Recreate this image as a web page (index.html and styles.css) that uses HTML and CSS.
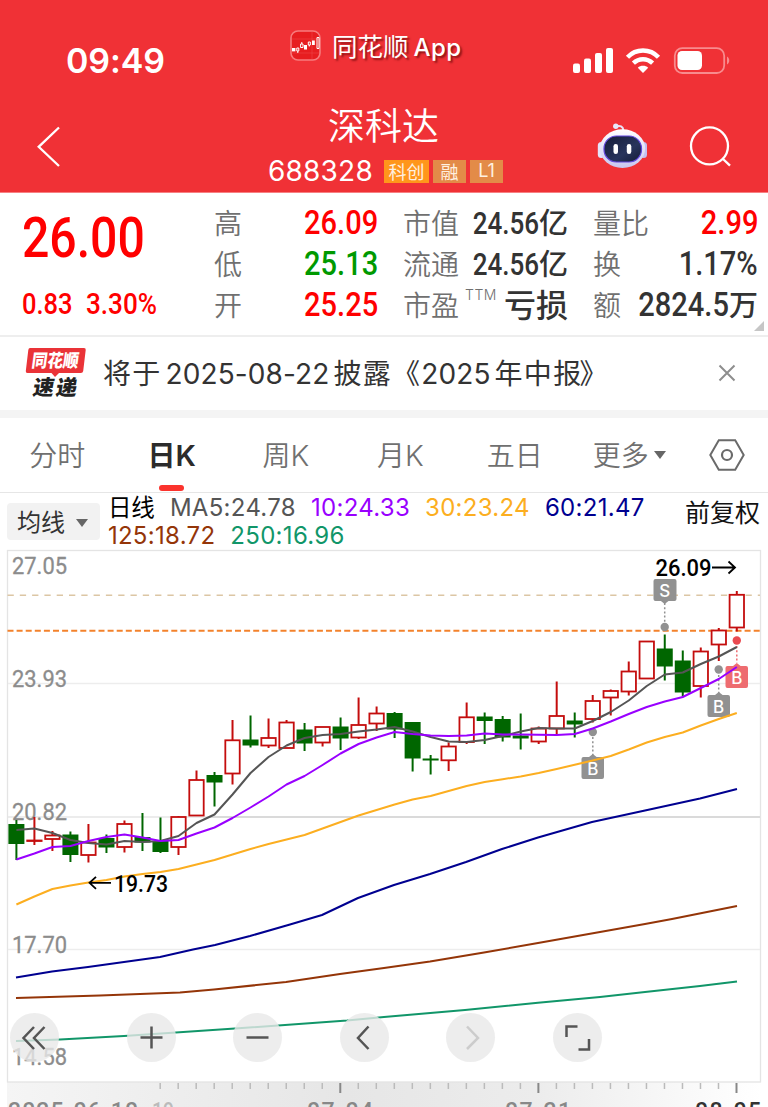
FILE: index.html
```html
<!DOCTYPE html>
<html lang="zh-CN">
<head>
<meta charset="utf-8">
<title>深科达 688328</title>
<link rel="stylesheet" href="styles.css">
</head>
<body>
<header class="header">
  <div class="status">
    <div class="clock">09:49</div>
    <div class="brand">
      <svg class="brand-icon" width="32" height="32" viewBox="0 0 32 32"><rect x="1" y="1" width="29" height="29" rx="7" fill="#e71d20" stroke="#f77b7d" stroke-width="1.6"/><path d="M22 2v27M2 9h27M2 23h27" stroke="#ee4548" stroke-width=".6"/><g fill="#fff"><rect x="2" y="18" width="3.4" height="3.4"/><rect x="14" y="15" width="3" height="4.5"/><rect x="22" y="10.5" width="2.8" height="4.5"/></g><g fill="none" stroke="#fff" stroke-width="1"><path d="M6.8 18h2v3h-2zM7.8 21v2M10.6 14h2.4v3.500h-2.400zM11.800 14v-2M18.300 12h2v3h-2zM19.300 15v1.500M27 7.500h2v11h-2z"/></g></svg>
      <span class="brand-name">同花顺<span class="brand-app">App</span></span>
    </div>
    <svg class="signals" width="160" height="30" viewBox="572 46 160 30"><g fill="#fff"><rect x="573" y="63.500" width="7" height="9.500" rx="2"/><rect x="584" y="58.500" width="7" height="14.500" rx="2"/><rect x="595" y="53" width="7" height="20" rx="2"/><rect x="606" y="48" width="7" height="25" rx="2"/><path d="M643 73l-5.200-5.300c2.800-2.600 7.600-2.600 10.400 0z"/></g><g fill="none" stroke="#fff" stroke-width="4.400"><path d="M627.500 57.300c8.400-9 22.600-9 31 0"/><path d="M633.400 63.200c5.500-5.300 13.700-5.300 19.200 0"/></g><rect x="674.800" y="48.200" width="49.400" height="24.800" rx="7.500" fill="none" stroke="#f88b8e" stroke-width="1.800"/><rect x="677.500" y="51" width="24.500" height="19" rx="4.500" fill="#fff"/><path d="M727 56.500c3 1.500 3 6.500 0 8z" fill="#f88b8e"/></svg>
  </div>
  <div class="nav">
    <svg class="back" width="26" height="44" viewBox="36 125 26 44"><path d="M59 127.500L38.700 146.800 59 166" fill="none" stroke="#fff" stroke-width="2.300"/></svg>
    <div class="stock">
      <div class="stock-name">深科达</div>
      <div class="stock-sub"><span class="code">688328</span><span class="tag tag-main">科创</span><span class="tag">融</span><span class="tag tag-l1">L1</span></div>
    </div>
    <svg class="robot" width="52" height="48" viewBox="596 122 52 48"><defs><linearGradient id="shell" x1="0" y1="0" x2="0" y2="1"><stop offset="0" stop-color="#fff"/><stop offset="1" stop-color="#c9c5ef"/></linearGradient><linearGradient id="visor" x1="0" y1="0" x2="1" y2="1"><stop offset="0" stop-color="#141b36"/><stop offset=".6" stop-color="#28345c"/><stop offset="1" stop-color="#141b36"/></linearGradient></defs><path d="M616 126.500c4-1.500 7 0 7.500 4" fill="none" stroke="#e9e3f5" stroke-width="2"/><circle cx="615.800" cy="126.200" r="2.700" fill="#e7e8fa"/><rect x="597.800" y="142" width="7" height="16" rx="3.500" fill="#e5e3fa"/><rect x="640" y="142" width="7" height="16" rx="3.500" fill="#c4bff0"/><ellipse cx="622.500" cy="148.600" rx="22.700" ry="19.400" fill="url(#shell)"/><rect x="604" y="136" width="37.500" height="26" rx="12.500" fill="url(#visor)" stroke="#6246dc" stroke-width="1.200"/><rect x="613.500" y="144" width="4.500" height="10" rx="2.200" fill="#fff"/><rect x="626.800" y="144" width="4.500" height="10" rx="2.200" fill="#fff"/></svg>
    <svg class="search" width="44" height="44" viewBox="688 124 44 44"><g fill="none" stroke="#fff" stroke-width="2.300"><circle cx="709.500" cy="145.900" r="18.500"/><path d="M722.500 158.500l7.500 7.200"/></g></svg>
  </div>
</header>

<section class="quote">
  <div class="price">
    <div class="last"><span class="din">26.00</span></div>
    <div class="change"><span class="din chg">0.83</span><span class="din pct">3.30%</span></div>
  </div>
  <dl class="col col-a">
    <dt>高</dt><dd class="up"><span class="din">26.09</span></dd>
    <dt>低</dt><dd class="down"><span class="din">25.13</span></dd>
    <dt>开</dt><dd class="up"><span class="din">25.25</span></dd>
  </dl>
  <dl class="col col-b">
    <dt>市值</dt><dd><span class="din small">24.56</span>亿</dd>
    <dt>流通</dt><dd><span class="din small">24.56</span>亿</dd>
    <dt>市盈<sup>TTM</sup></dt><dd class="loss">亏损</dd>
  </dl>
  <dl class="col col-c">
    <dt>量比</dt><dd class="up"><span class="din">2.99</span></dd>
    <dt>换</dt><dd><span class="din">1.17%</span></dd>
    <dt>额</dt><dd><span class="din">2824.5</span>万</dd>
  </dl>
  <i class="corner"></i>
</section>

<section class="notice">
  <svg class="flash" width="64" height="54" viewBox="24 346 64 54"><path d="M30 348h54q2 0 1.700 2l-2.500 21q-.3 2-2.300 2H59l-4 4-3.500-4H27.500q-2 0-1.700-2l2.500-21q.3-2 1.700-2z" fill="#ea3338"/><g transform="translate(31 367) skewX(-8)"><text class="flash-a" x="0" y="0" textLength="47" lengthAdjust="spacingAndGlyphs">同花顺</text></g><g transform="translate(32 395) skewX(-10)"><text class="flash-b" x="0" y="0" textLength="44">速递</text></g></svg>
  <p class="notice-text">将于<span class="num">2025-08-22</span>披露《<span class="num year">2025</span>年中报<span class="close-mark">》</span></p>
  <svg class="close" width="18" height="18" viewBox="0 0 18 18"><path d="M1.500 1.500l15 15M16.500 1.500l-15 15" stroke="#8e8e8e" stroke-width="2" fill="none"/></svg>
</section>

<nav class="tabs">
  <span class="tab">分时</span>
  <span class="tab active">日<b>K</b></span>
  <span class="tab">周<b>K</b></span>
  <span class="tab">月<b>K</b></span>
  <span class="tab">五日</span>
  <span class="tab">更多<i class="caret"></i></span>
  <svg class="gear" width="36" height="32" viewBox="0 0 36 32"><path d="M9.800 1.200h16.400L34.700 16l-8.500 14.800H9.800L1.300 16z" fill="none" stroke="#6a6a6a" stroke-width="2"/><circle cx="18" cy="16" r="5" fill="none" stroke="#6a6a6a" stroke-width="2.200"/></svg>
</nav>

<section class="legend">
  <div class="selector">均线<i class="caret"></i></div>
  <div class="series">
    <div class="line"><span class="period">日线</span><span class="ma5">MA5:24.78</span><span class="ma10">10:24.33</span><span class="ma30">30:23.24</span><span class="ma60">60:21.47</span></div>
    <div class="line"><span class="ma125">125:18.72</span><span class="ma250">250:16.96</span></div>
  </div>
  <div class="adjust">前复权</div>
</section>

<section class="chart">
  <svg class="plot" id="plot" width="768" height="558" viewBox="0 549 768 558">
    <defs><linearGradient id="axis" x1="0" x2="1" y1="0" y2="0"><stop offset="0" stop-color="#f5f5f5"/><stop offset=".2" stop-color="#eee"/><stop offset=".45" stop-color="#e6e6e6"/><stop offset=".7" stop-color="#ececec"/><stop offset="1" stop-color="#fff"/></linearGradient></defs>
    <rect x="7" y="1082" width="754" height="25" fill="url(#axis)"/>
    <g fill="none" stroke="#e4e4e4" stroke-width="1.300"><rect x="7.500" y="550.500" width="753" height="531.500"/><path d="M8 683.500H760M8 949.500H760" stroke="#ededed"/><path d="M8 817H240" stroke="#e6e6e6"/><path d="M210 817H760" stroke="#dadada" stroke-width="1.800"/></g>
    <path d="M7.500 595.200H760" stroke="#dcc6a4" stroke-width="1.500" stroke-dasharray="6.300 6"/>
    <path d="M7.500 630.700H760" stroke="#f3822c" stroke-width="2" stroke-dasharray="6 3.100"/>
    <g class="scale">
      <text x="12" y="574" textLength="55" lengthAdjust="spacingAndGlyphs">27.05</text>
      <text x="12" y="687" textLength="55" lengthAdjust="spacingAndGlyphs">23.93</text>
      <text x="12" y="820" textLength="55" lengthAdjust="spacingAndGlyphs">20.82</text>
      <text x="12" y="953" textLength="55" lengthAdjust="spacingAndGlyphs">17.70</text>
      <text x="12" y="1065" textLength="55" lengthAdjust="spacingAndGlyphs">14.58</text>
    </g>
    <g id="candles"></g>
    <g class="marks">
      <g fill="#919191" stroke="#919191"><path d="M664.700 603v19M592.800 737v18M718.700 675v18" stroke-width="1.500" stroke-dasharray="2 2.200"/><g stroke="none"><circle cx="664.700" cy="627" r="4.200"/><circle cx="592.800" cy="732" r="4.200"/><circle cx="718.700" cy="669.500" r="4.200"/><path d="M655.500 579h19q2 0 2 2v18q0 2-2 2h-6l-3.800 3-3.800-3h-5.400q-2 0-2-2v-18q0-2 2-2zM583.500 757h5.500l3.800-3 3.800 3h5.400q2 0 2 2v18q0 2-2 2h-18.500q-2 0-2-2v-18q0-2 2-2zM709.500 695h5.500l3.800-3 3.800 3h5.400q2 0 2 2v18q0 2-2 2h-18.500q-2 0-2-2v-18q0-2 2-2z"/></g></g>
      <g fill="#ee6c70"><path d="M736.800 646v17" stroke="#ee6c70" stroke-width="1.500" stroke-dasharray="2 2.200"/><circle cx="736.800" cy="640.500" r="4.200" fill="#ea4a50"/><path d="M727.500 666h5.500l3.800-3 3.800 3h5.400q2 0 2 2v18q0 2-2 2h-18.500q-2 0-2-2v-18q0-2 2-2z"/></g>
      <text x="664.700" y="597">S</text><text x="592.800" y="775">B</text><text x="718.700" y="713">B</text><text x="736.800" y="684">B</text>
    </g>
    <g id="averages" fill="none" stroke-width="2" stroke-linejoin="round"></g>
    <g class="extreme"><text x="655.500" y="576" textLength="56" lengthAdjust="spacingAndGlyphs">26.09</text><text x="114" y="891.500" textLength="54" lengthAdjust="spacingAndGlyphs">19.73</text><path d="M712 567.500h22.500M728.500 561.500l6.500 6-6.500 6M111 882.800H89.500M96 876.800l-6.500 6 6.500 6" fill="none" stroke="#000" stroke-width="1.800"/></g>
    <g id="ticks"></g>
    <g class="dates"><text x="8" y="1119" textLength="130" lengthAdjust="spacing">2025-06-10</text><text x="152" y="1119" textLength="22" lengthAdjust="spacingAndGlyphs" fill="#bbb">19</text><text x="307" y="1119" textLength="66" lengthAdjust="spacing">07-04</text><text x="505" y="1119" textLength="66" lengthAdjust="spacing">07-21</text><text x="695" y="1119" textLength="66" lengthAdjust="spacing" fill="#333">08-05</text></g>
  </svg>
  <div class="controls">
    <span class="ctl first"><svg width="49" height="49" viewBox="0 0 49 49"><path d="M24 14L13.500 25 24 36M34.500 14L24 25l10.500 11"/></svg></span>
    <span class="ctl"><svg width="49" height="49" viewBox="0 0 49 49"><path d="M13.500 24.500h22M24.500 13.500v22"/></svg></span>
    <span class="ctl"><svg width="49" height="49" viewBox="0 0 49 49"><path d="M13.500 24.500h22"/></svg></span>
    <span class="ctl"><svg width="49" height="49" viewBox="0 0 49 49"><path d="M28.500 13.500L18 25l10.500 11"/></svg></span>
    <span class="ctl off"><svg width="49" height="49" viewBox="0 0 49 49"><path d="M21 13.500L32 25 21 36"/></svg></span>
    <span class="ctl"><svg width="49" height="49" viewBox="0 0 49 49"><path d="M13.500 24V13.500H24.500M36 26v10.500H25.500"/></svg></span>
  </div>
</section>
<script src="chart.js"></script>
</body>
</html>
```
FILE: styles.css
```css
* { box-sizing: border-box; margin: 0; padding: 0; }
body { width: 768px; height: 1107px; overflow: hidden; background: #fff; color: #333; font-family: "Inter", "Noto Sans CJK SC", sans-serif; }
svg { display: block; flex: none; }

.header { height: 193px; background: #f03136; border-bottom: 1px solid #f78083; color: #fff; }
.status { height: 92px; padding: 28px 36px 0 66px; display: flex; align-items: flex-start; }
.clock { width: 224px; font-size: 34px; line-height: 40px; font-weight: 600; padding-top: 13px; letter-spacing: -.1px; }
.brand { display: flex; gap: 10px; width: 282px; padding-top: 2px; }
.brand-name { font-family: "Noto Sans CJK SC", sans-serif; font-size: 25.500px; line-height: 34px; margin-top: -2px; text-shadow: 2px 2px 2px rgba(80, 0, 0, .6); white-space: nowrap; }
.brand-app { font-family: "Inter", sans-serif; font-size: 24px; margin-left: 5px; letter-spacing: .5px; font-weight: 500; }
.signals { margin-top: 18px; }
.nav { height: 100px; padding-left: 36px; display: flex; align-items: flex-start; }
.back { margin-top: 33px; }
.stock { width: 322px; margin-left: 162px; padding-left: 44px; white-space: nowrap; }
.stock-name { padding-left: 60px; font: 350 37px/56px "Noto Sans CJK SC", sans-serif; margin-top: 4px; }
.stock-sub { display: flex; align-items: center; height: 34px; margin-top: 2px; }
.code { width: 116px; font-size: 28px; letter-spacing: .2px; margin-left: 0; }
.tag { height: 23px; width: 33px; margin-right: 4px; background: #e38b48; color: #fff0e0; font: 18px/22px "Noto Sans CJK SC", sans-serif; text-align: center; }
.tag-main { width: 45px; background: #ff961b; }
.tag-l1 { font-family: "Inter", sans-serif; font-size: 18px; }
.robot { margin: 30px 0 0 50px; }
.search { margin: 32px 0 0 40px; }

.quote { position: relative; height: 144px; border-bottom: 2px solid #eee; display: grid; grid-template-columns: 167px 164px 165px 165px; column-gap: 25px; padding-left: 22px; }
.din { display: inline-block; font-family: "Roboto", sans-serif; font-weight: 500; transform: scaleX(.88); transform-origin: right; }
.price { color: #f00; }
.price .din { transform-origin: left; }
.last { height: 91px; font-size: 56px; line-height: 89px; }
.price .last .din { transform: scaleX(.86); }
.change { display: flex; font-size: 29px; line-height: 40px; }
.chg { width: 64px; }
.price .pct { transform: scaleX(.9); }
.col { padding-top: 9px; display: grid; grid-template-columns: auto 1fr; grid-auto-rows: 41px; line-height: 41px; font-family: "Noto Sans CJK SC", sans-serif; white-space: nowrap; }
.col dt { font-size: 28px; color: #707070; font-weight: 350; }
.col dd { font-size: 29px; font-weight: 500; text-align: right; justify-self: end; margin: -1px 0 0 -40px; }
.col dd .din { font-size: 33px; }
.col dd .small { font-size: 31px; transform: scaleX(.84); }
.col .loss { font-size: 32px; }
.col sup { font: 300 14px/14px "Inter", sans-serif; margin-left: 6px; letter-spacing: .5px; position: absolute; padding-top: 4px; }
.up { color: #f00; }
.down { color: #090; }
.corner { position: absolute; right: 4px; bottom: 4px; border-left: 10px solid transparent; border-bottom: 10px solid #c6c6c6; }

.notice { height: 81px; padding: 9px 32px 0 24px; border-bottom: 8px solid #f4f4f4; display: flex; }
.notice-text { margin-left: 15px; width: 615px; font-family: "Noto Sans CJK SC", sans-serif; font-size: 28px; line-height: 54px; letter-spacing: 1.300px; white-space: nowrap; margin-top: -1px; }
.num { font-family: "Inter", sans-serif; letter-spacing: .1px; margin: 0 4px; }
.year { margin-left: 0; }
.close-mark { margin-left: -3px; }
.close { margin-top: 18px; }
.flash-a { font: 900 18px "Noto Sans CJK SC", sans-serif; fill: #fff; }
.flash-b { font: 900 21px "Noto Sans CJK SC", sans-serif; fill: #222; }

.tabs { height: 75px; border-bottom: 1px solid #e6e6e6; display: grid; grid-template-columns: repeat(6, 114.400px) 1fr; align-items: center; }
.tab { position: relative; height: 74px; text-align: center; font: 350 28px/73px "Noto Sans CJK SC", sans-serif; color: #707070; white-space: nowrap; }
.tab b { font-family: "Inter", sans-serif; font-weight: 300; font-size: 29px; }
.active, .active b { color: #2b2b2b; font-weight: 600; }
.active::after { content: ""; position: absolute; left: 45px; bottom: 1px; width: 25px; height: 6px; border-radius: 3px; background: #fb332d; }
.caret { display: inline-block; border: 6px solid transparent; border-top: 8px solid #666; border-bottom: 0; margin-left: 5px; vertical-align: 7px; }
.gear { justify-self: center; }

.legend { height: 56px; padding: 0 8px 0 7px; display: flex; }
.selector { width: 93px; height: 37px; margin-top: 10px; padding-left: 10px; border-radius: 4px; background: #f2f2f2; color: #333; font: 24px/36px "Noto Sans CJK SC", sans-serif; white-space: nowrap; }
.selector .caret { margin-left: 11px; vertical-align: 4px; border-width: 8px 6px 0; }
.series { width: 586px; padding: 1px 0 0 8px; font-size: 24px; letter-spacing: .3px; }
.line { display: flex; gap: 15px; height: 28px; line-height: 28px; white-space: nowrap; }
.period { color: #000; font-family: "Noto Sans CJK SC", sans-serif; font-size: 23.500px; letter-spacing: 0; line-height: 26px; margin-top: -1px; }
.ma5 { color: #555; }
.ma10 { color: #90f; }
.ma30 { color: #fcae20; }
.ma60 { color: #000090; }
.ma125 { color: #943508; }
.ma250 { color: #119669; }
.adjust { flex: 1; text-align: right; color: #111; font: 25px/37px "Noto Sans CJK SC", sans-serif; white-space: nowrap; }

.chart { position: relative; height: 558px; }
.scale text { font: 400 24px "Roboto", sans-serif; fill: #8c8c8c; stroke: #8c8c8c; stroke-width: .3px; }
.marks text { font: 500 17px "Inter", sans-serif; fill: #fff; text-anchor: middle; }
.extreme text { font: 500 24px "Roboto", sans-serif; fill: #000; }
.dates { font: 500 23px "Roboto", sans-serif; fill: #888; }
.controls { position: absolute; left: 10px; top: 464px; display: flex; gap: 57.500px; }
.ctl { width: 49px; height: 49px; border-radius: 50%; background: rgba(232, 232, 232, .8); }
.ctl.first { margin-right: 10px; }
.ctl path { fill: none; stroke: #555; stroke-width: 2.500; }
.ctl.off path { stroke: #ccc; }
```
FILE: chart.js
```js
const NS = 'http://www.w3.org/2000/svg';
const X = i => 16.4 + 18.01 * i;
const add = (parent, tag, attrs) => {
  const el = document.createElementNS(NS, tag);
  for (const k in attrs) el.setAttribute(k, attrs[k]);
  document.getElementById(parent).appendChild(el);
};

// [direction, body top, body bottom, wick top, wick bottom]
const candles = [
  ['g',824,844,820,860],['r',840.5,841,817,845],['r',835.5,839,831,851],['g',834.5,855,831.5,862],['r',842.5,855,824,862.5],
  ['g',838,847.5,834.5,853],['r',824,847,820.5,852.5],['g',837,842.5,813,851],['g',841,852,817.5,853],['r',817,847,816,855],
  ['r',780,815.5,770.5,815.5],['g',775,782.5,772,806.5],['r',740.3,773.5,720,784.5],['g',739.5,745.5,715.5,747.5],['r',738,745.5,718.5,748],
  ['r',722.5,748,720,748],['g',729.5,743.5,723,751],['r',727,742.5,727,746.5],['g',726.5,738.5,717.5,750],['r',725,737.5,697.5,739],
  ['r',713.5,723.5,706.5,731],['g',713,729.5,712,738],['g',722,758.5,722,771.5],['g',758.5,760.5,755,774.5],['r',746.5,760.3,742.5,771],
  ['r',717.3,742,702.5,744],['g',716.5,721,712.5,744],['g',719,737.5,716,741.5],['g',735.5,738.5,713.5,749.5],['r',728.5,741.5,726.5,744],
  ['r',716,728.5,681.5,735],['g',720.5,724.5,712.5,737.5],['r',701,719,695,722.5],['r',691,697.5,689.5,715.5],['r',671.5,691.5,661.5,695.5],
  ['r',641.5,678.5,641.5,678.5],['g',648.5,666.5,634.5,680.5],['g',660.5,692.5,650.5,696.5],['r',651.5,686,647.5,697.5],['r',630.5,644.5,628,661],
  ['r',594.8,627.5,591,631.5]
];
candles.forEach(([c, t, b, wt, wb], i) => {
  const x = X(i);
  const color = c === 'r' ? '#c40d0d' : '#006600';
  add('candles', 'path', { d: `M${x} ${wt}V${wb}`, stroke: color, 'stroke-width': 2 });
  add('candles', 'rect', c === 'r'
    ? { x: x - 7.2, y: t, width: 14.4, height: b - t, fill: '#fff', stroke: color, 'stroke-width': 1.8 }
    : { x: x - 8, y: t, width: 16, height: b - t, fill: color });
});

const perDay = ys => ys.map((y, i) => `${X(i)},${y}`).join(' ');
const lines = [
  ['#119669', '16,1041 60,1039.5 124,1036 235,1028.5 347,1020.5 384,1017 465,1010 538,1002.7 600,997 645,992 700,986 737,981.5'],
  ['#943508', '16,998 100,995.5 180,992.5 214,989.5 286,982 340,974 384,968 430,961.5 484,952.5 538,943 600,932 645,924 672,919 737,906'],
  ['#000090', '16,977.5 52,971.5 88,967 124,962 160,957 193,949.5 215,945 250,936 290,924.5 322,915 358,898 394,885 430,874 466,862 502,849 538,837.5 592,822 645,810.5 700,798.5 737,789'],
  ['#fcae20', perDay([904.5,896.5,889,885.5,882.5,880,876.5,874,872,869,864.5,860,854.5,849,844,839.5,835,828.5,822,815.5,810,804.5,799.5,796,791,786,782,779.2,776.5,773,769,764.8,760.5,756,749.5,742.5,737,732.5,725.5,719,713])],
  ['#555', perDay([830,828.5,833,840,843,844.5,841,842,841,836,823,814.5,794.5,773,757,745.5,738,735,734,731.5,729.5,727,731.5,737,741.5,742,740,736,731.5,728,728.5,728.5,721,712,700.5,686,674.5,672.5,664,656.5,647])],
  ['#90f', perDay([859.5,853.5,847,846,841,837,834.5,837.5,841,840,833.5,827.5,818,807.5,796.5,784.5,776,765,753.5,744,737.5,732,734,735.5,736,735.5,733.5,734.5,734.5,734.7,735,734,728.5,721.5,714,707,701.5,697,688,679,667])]
];
lines.forEach(([stroke, points]) => add('averages', 'polyline', { stroke, points }));

for (let i = 8; i <= 40; i++) {
  const major = i === 18 || i === 29 || i === 40;
  add('ticks', 'path', {
    d: `M${X(i) - .3} 1083v${major ? 10 : 6}`,
    stroke: major ? '#888' : '#bbb',
    'stroke-width': major ? 2 : 1.5
  });
}
```
